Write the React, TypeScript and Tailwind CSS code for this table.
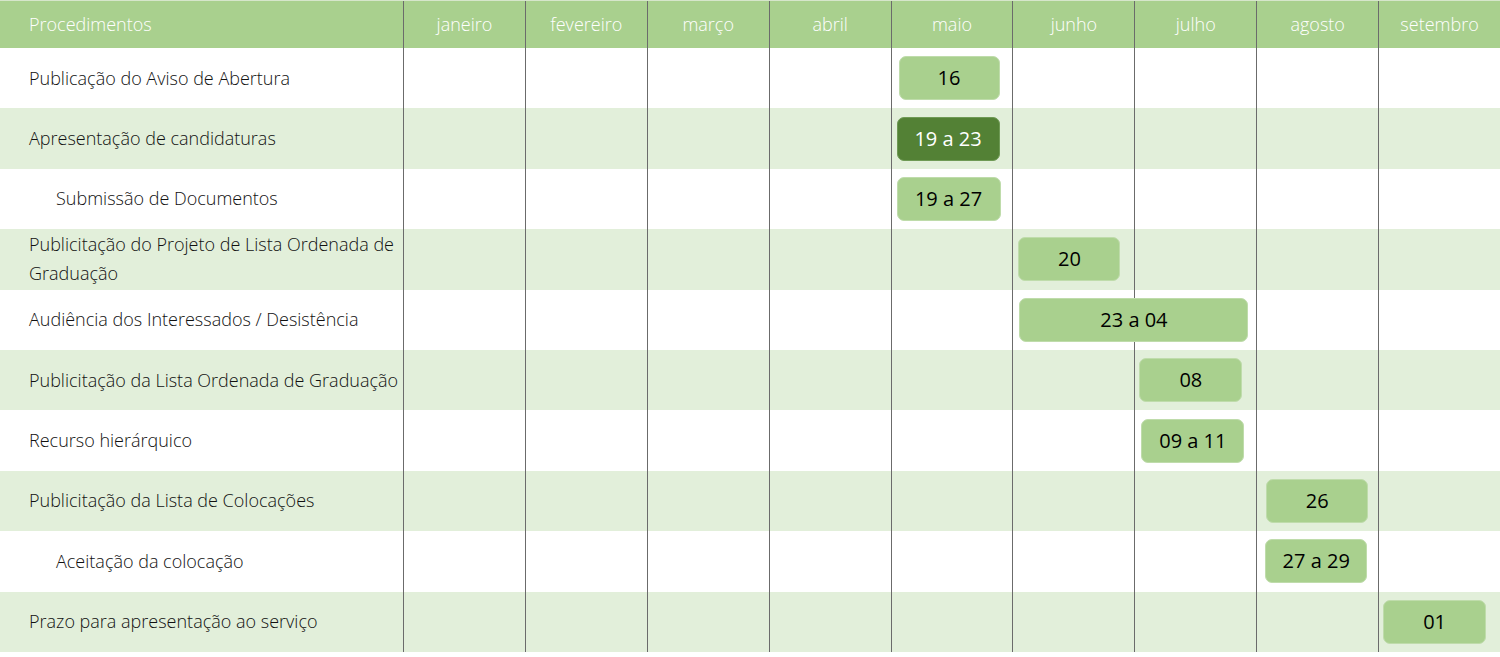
const months = [
  "janeiro",
  "fevereiro",
  "março",
  "abril",
  "maio",
  "junho",
  "julho",
  "agosto",
  "setembro",
];

type Row = {
  label: string;
  sub?: boolean;
  badge: string;
  place: string;
  dark?: boolean;
};

const rows: Row[] = [
  { label: "Publicação do Aviso de Abertura", badge: "16", place: "col-start-6 ml-[8px] w-[101px]" },
  { label: "Apresentação de candidaturas", badge: "19 a 23", place: "col-start-6 ml-[6px] w-[103px]", dark: true },
  { label: "Submissão de Documentos", sub: true, badge: "19 a 27", place: "col-start-6 ml-[6px] w-[104px]" },
  {
    label: "Publicitação do Projeto de Lista Ordenada de Graduação",
    badge: "20",
    place: "col-start-7 ml-[6px] w-[102px]",
  },
  { label: "Audiência dos Interessados / Desistência", badge: "23 a 04", place: "col-start-7 col-span-2 ml-[7px] w-[229px]" },
  { label: "Publicitação da Lista Ordenada de Graduação", badge: "08", place: "col-start-8 ml-[5px] w-[103px]" },
  { label: "Recurso hierárquico", badge: "09 a 11", place: "col-start-8 ml-[7px] w-[103px]" },
  { label: "Publicitação da Lista de Colocações", badge: "26", place: "col-start-9 ml-[10px] w-[102px]" },
  { label: "Aceitação da colocação", sub: true, badge: "27 a 29", place: "col-start-9 ml-[9px] w-[102px]" },
  { label: "Prazo para apresentação ao serviço", badge: "01", place: "col-start-10 ml-[5px] w-[103px]" },
];

const cols = [
  "col-start-2",
  "col-start-3",
  "col-start-4",
  "col-start-5",
  "col-start-6",
  "col-start-7",
  "col-start-8",
  "col-start-9",
  "col-start-10",
];

const grid = "grid grid-cols-[403px_repeat(9,minmax(0,1fr))]";

export default function App() {
  return (
    <div className="h-[657px] w-[1500px] bg-white font-['Open_Sans',sans-serif] text-[#111] font-light">
      <div className={`${grid} h-[48px] bg-[#a9d08e] text-white text-[18px] border-t border-[#d6e6cb]`}>
        <div className="flex items-center pl-[29px]">Procedimentos</div>
        {months.map((m) => (
          <div key={m} className="flex items-center justify-center border-l border-[#6b6b6b]">
            {m}
          </div>
        ))}
      </div>

      {rows.map((r, i) => (
        <div
          key={r.label}
          className={`${grid} h-[60.4px] ${i % 2 === 1 ? "bg-[#e2efda]" : "bg-white"}`}
        >
          <div
            className={`row-start-1 col-start-1 flex items-center pr-1 text-[18px] leading-[29px] ${
              r.sub ? "pl-[56px]" : "pl-[29px]"
            }`}
          >
            {r.label}
          </div>
          {months.map((m, j) => (
            <div key={m} className={`row-start-1 border-l border-[#6b6b6b] ${cols[j]}`} />
          ))}
          <div
            className={`row-start-1 self-center h-[44px] rounded-[7px] flex items-center justify-center text-[20px] font-normal border ${
              r.place
            } ${
              r.dark
                ? "bg-[#538135] border-[#6f9a55] text-white"
                : "bg-[#a9d08e] border-[#bfdcab] text-black"
            }`}
          >
            {r.badge}
          </div>
        </div>
      ))}
    </div>
  );
}
